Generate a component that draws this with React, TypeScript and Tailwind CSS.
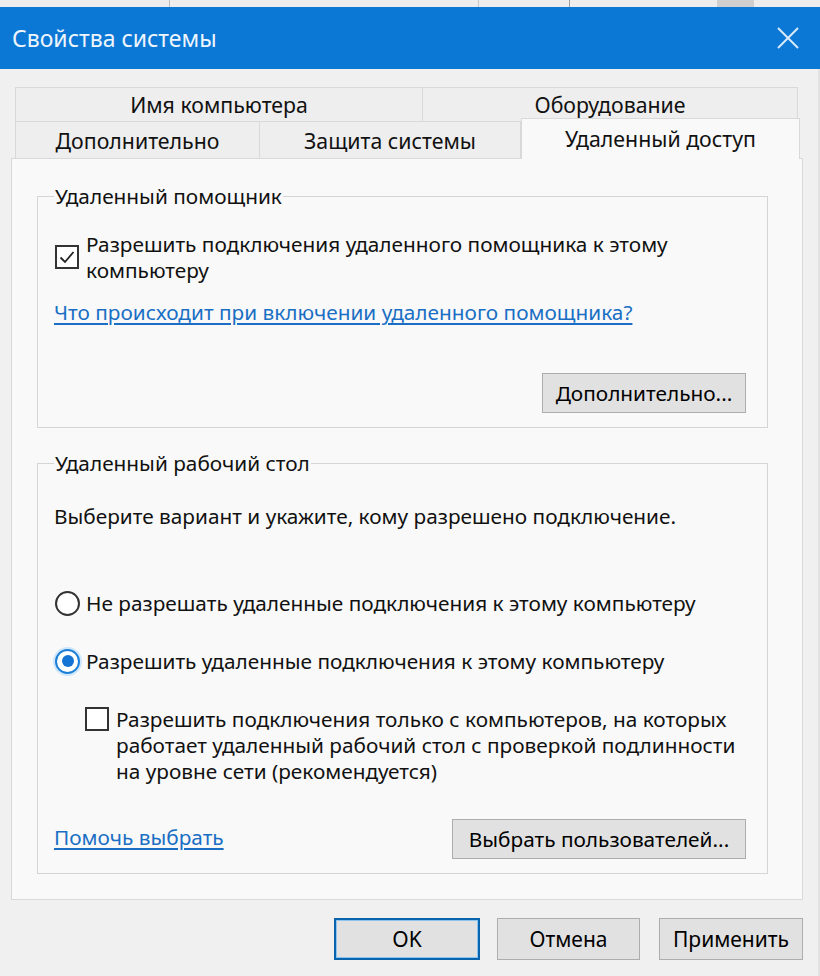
import React from "react";

function CheckBox({ checked }: { checked: boolean }) {
  return (
    <div className="w-[24px] h-[24px] shrink-0 border-[2px] border-[#333333] bg-white flex items-center justify-center">
      {checked && (
        <svg width="18" height="18" viewBox="0 0 18 18">
          <polyline points="2.5,9.5 7,14 15.5,4" fill="none" stroke="#222222" strokeWidth="1.8" />
        </svg>
      )}
    </div>
  );
}

function Radio({ checked }: { checked: boolean }) {
  if (checked) {
    return (
      <div className="w-[25px] h-[25px] shrink-0 rounded-full border-[2px] border-[#1b7fd8] bg-white shadow-[0_0_0_2px_#cfe6fb] flex items-center justify-center">
        <div className="w-[12px] h-[12px] rounded-full bg-[#1473d3]" />
      </div>
    );
  }
  return <div className="w-[25px] h-[25px] shrink-0 rounded-full border-[2px] border-[#333333] bg-white" />;
}

function Btn({ children, className }: { children: React.ReactNode; className: string }) {
  return (
    <div className={"h-[40px] flex items-center justify-center border border-[#adadad] bg-[#e1e1e1] text-[20.8px] text-black " + className}>
      {children}
    </div>
  );
}

export default function App() {
  return (
    <div className="w-[820px] h-[976px] bg-[#f0f0f0] flex flex-col font-['Noto_Sans','Open_Sans',sans-serif] text-[#111111] leading-[26px] overflow-hidden">
      {/* strip of window behind */}
      <div className="h-[7px] bg-[#ededed] flex items-stretch">
        <div className="w-[170px] border-r border-[#bdbdbd]" />
        <div className="w-[309px] border-r border-[#c8c8c8]" />
        <div className="w-[91px] border-r border-[#9e9e9e]" />
        <div className="w-[147px]" />
        <div className="w-[37px] bg-[#cfcfcf]" />
      </div>

      {/* title bar */}
      <div className="h-[62px] bg-[#0b78d5] flex items-center justify-between pl-[12px] pr-[21px] shrink-0">
        <span className="text-[23px] text-[#eef5fc]">Свойства системы</span>
        <svg width="22" height="22" viewBox="0 0 22 22">
          <line x1="1" y1="1" x2="21" y2="21" stroke="#dbeaf8" strokeWidth="2" />
          <line x1="21" y1="1" x2="1" y2="21" stroke="#dbeaf8" strokeWidth="2" />
        </svg>
      </div>

      {/* body */}
      <div className="flex-1 pt-[18px] pl-[11px] pr-[17px] flex flex-col border-r-[2px] border-[#e2e2e2]">
        {/* tabs */}
        <div className="ml-[4px] flex flex-col text-[21.3px] text-[#111111]">
          <div className="flex h-[35px]">
            <div className="w-[408px] border border-[#d9d9d9] bg-[#eeeeee] flex items-center justify-center">Имя компьютера</div>
            <div className="w-[375px] border border-l-0 border-[#d9d9d9] bg-[#eeeeee] flex items-center justify-center">Оборудование</div>
          </div>
          <div className="flex h-[36px] items-end">
            <div className="w-[245px] h-[36px] border-x border-[#d9d9d9] bg-[#eeeeee] flex items-center justify-center pt-[2px]">Дополнительно</div>
            <div className="w-[261px] h-[36px] border-r border-[#d9d9d9] bg-[#eeeeee] flex items-center justify-center pt-[2px]">Защита системы</div>
            <div className="relative z-10 w-[279px] h-[41px] -mb-[1px] border-x border-t border-[#d9d9d9] bg-[#f9f9f9] flex items-center justify-center pb-[1px]">Удаленный доступ</div>
          </div>
        </div>

        {/* panel */}
        <div className="w-[792px] border border-[#d9d9d9] bg-[#f9f9f9] pt-[24px] pl-[25px] pr-[34px] pb-[25px] text-[20.8px]">
          <fieldset className="w-[731px] border border-[#d5d5d5] pl-[16px] pr-[21px] pb-[14px]">
            <legend className="px-[1px] leading-[26px]">Удаленный помощник</legend>
            <div className="mt-[22px] flex items-center ml-[1px]">
              <CheckBox checked />
              <div className="ml-[7px] w-[600px]">
                Разрешить подключения удаленного помощника к этому компьютеру
              </div>
            </div>
            <div className="mt-[16px]">
              <span className="text-[#1a6fc4] underline underline-offset-[3px] decoration-[#1a6fc4]">Что происходит при включении удаленного помощника?</span>
            </div>
            <div className="mt-[48px] flex justify-end">
              <Btn className="w-[204px]">Дополнительно...</Btn>
            </div>
          </fieldset>

          <fieldset className="w-[731px] mt-[22px] border border-[#d5d5d5] pl-[16px] pr-[21px] pb-[14px]">
            <legend className="px-[1px] leading-[26px]">Удаленный рабочий стол</legend>
            <div className="mt-[27px]">Выберите вариант и укажите, кому разрешено подключение.</div>
            <div className="mt-[61px] flex items-center ml-[1px]">
              <Radio checked={false} />
              <span className="ml-[6px]">Не разрешать удаленные подключения к этому компьютеру</span>
            </div>
            <div className="mt-[32px] flex items-center ml-[1px]">
              <Radio checked />
              <span className="ml-[6px]">Разрешить удаленные подключения к этому компьютеру</span>
            </div>
            <div className="mt-[32px] flex items-start ml-[31px]">
              <div className="mt-[1px]">
                <CheckBox checked={false} />
              </div>
              <div className="ml-[7px] w-[628px]">
                Разрешить подключения только с компьютеров, на которых работает удаленный рабочий стол с проверкой подлинности на уровне сети (рекомендуется)
              </div>
            </div>
            <div className="mt-[35px] flex items-center justify-between">
              <span className="text-[#1a6fc4] underline underline-offset-[3px] decoration-[#1a6fc4] -mt-[4px]">Помочь выбрать</span>
              <Btn className="w-[294px] h-[40px]">Выбрать пользователей...</Btn>
            </div>
          </fieldset>
        </div>

        {/* bottom buttons */}
        <div className="w-[792px] mt-[18px] flex justify-end">
          <div className="w-[146px] h-[42px] border-[2px] border-[#0a64ad] bg-[#e1e1e1] shadow-[inset_0_0_0_1px_#8cc4f0] flex items-center justify-center text-[21px] text-black">OK</div>
          <div className="ml-[17px] w-[143px] h-[42px] border border-[#adadad] bg-[#e1e1e1] flex items-center justify-center text-[21px] text-black">Отмена</div>
          <div className="ml-[19px] w-[144px] h-[42px] border border-[#adadad] bg-[#e1e1e1] flex items-center justify-center text-[21px] text-black">Применить</div>
        </div>
      </div>
    </div>
  );
}
